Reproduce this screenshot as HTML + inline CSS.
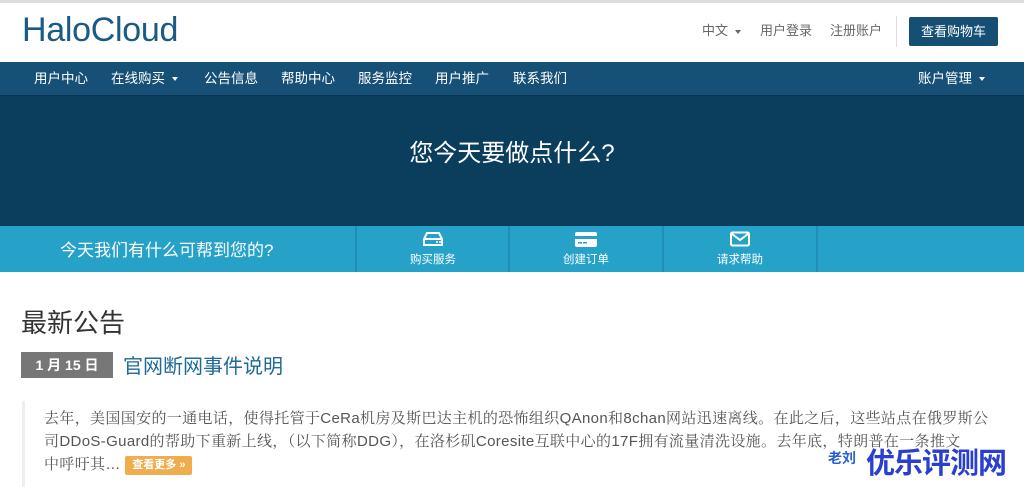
<!DOCTYPE html>
<html><head><meta charset="utf-8"><style>
*{margin:0;padding:0;box-sizing:border-box}
body{width:1024px;height:487px;overflow:hidden;background:#fff;font-family:"Liberation Sans","Noto Sans CJK SC",sans-serif;position:relative}
.abs{position:absolute}
.top{top:0;left:0;width:1024px;height:3px;background:#ddd}
.logo{left:22px;top:11px;font-size:34px;color:#1a5a86;letter-spacing:-0.3px}
.tl{top:20px;font-size:13px;color:#666}
.cart{left:909px;top:17px;width:89px;height:29px;background:#164f74;color:#fff;font-size:13px;text-align:center;line-height:29px;border-radius:2px}
.sep{left:896px;top:16px;width:1px;height:31px;background:#ddd}
.nav{top:62px;left:0;width:1024px;height:33px;background:#175077}
.nav span{position:absolute;top:5px;color:#fff;font-size:13.5px}
.car{display:inline-block;border-left:3.5px solid transparent;border-right:3.5px solid transparent;border-top:4px solid currentColor;vertical-align:middle;margin-left:7px}
.hero{top:95px;left:0;width:1024px;height:131px;background:#0b3d5c;border-top:1px solid #0a3552}
.hero h1{position:absolute;width:100%;top:37px;text-align:center;color:#fff;font-weight:normal;font-size:24px}
.band{top:226px;left:0;width:1024px;height:46px;background:#26a2c9}
.band .q{position:absolute;left:60px;top:10px;color:#fff;font-size:17px}
.band .d{position:absolute;top:0;width:2px;height:46px;background:#1f8fb3}
.band .it{position:absolute;top:5px;width:152px;text-align:center;color:#fff;font-size:11.5px}
.it svg{display:block;margin:0 auto 4px}
.txt{left:44px;top:407px;font-size:15px;line-height:23px;color:#555;white-space:nowrap;letter-spacing:0.35px;font-family:"Liberation Sans","Noto Serif CJK SC",serif}
</style></head><body>
<div class="abs top"></div>
<div class="abs logo">HaloCloud</div>
<div class="abs tl" style="left:702px">中文<span class="car" style="color:#666"></span></div>
<div class="abs tl" style="left:760px">用户登录</div>
<div class="abs tl" style="left:830px">注册账户</div>
<div class="abs sep"></div>
<div class="abs cart">查看购物车</div>
<div class="abs nav">
<span style="left:34px">用户中心</span>
<span style="left:111px">在线购买<i class="car"></i></span>
<span style="left:204px">公告信息</span>
<span style="left:281px">帮助中心</span>
<span style="left:358px">服务监控</span>
<span style="left:435px">用户推广</span>
<span style="left:513px">联系我们</span>
<span style="left:918px">账户管理<i class="car"></i></span>
</div>
<div class="abs hero"><h1>您今天要做点什么?</h1></div>
<div class="abs band">
<div class="q">今天我们有什么可帮到您的?</div>
<div class="d" style="left:355px"></div><div class="d" style="left:508px"></div><div class="d" style="left:662px"></div><div class="d" style="left:816px"></div>
<div class="it" style="left:357px"><svg width="22" height="16" viewBox="0 0 22 16"><path d="M5 2h12l3 6v6H2V8z M2 8h18" fill="none" stroke="#fff" stroke-width="2"/><circle cx="15" cy="11" r="1" fill="#fff"/><circle cx="18" cy="11" r="1" fill="#fff"/></svg>购买服务</div>
<div class="it" style="left:510px"><svg width="22" height="16" viewBox="0 0 22 16"><rect x="0" y="1" width="22" height="15" rx="2" fill="#fff"/><rect x="0" y="5" width="22" height="3" fill="#26a2c9"/><rect x="3" y="11" width="4" height="1.5" fill="#26a2c9"/><rect x="8" y="11" width="4" height="1.5" fill="#26a2c9"/></svg>创建订单</div>
<div class="it" style="left:664px"><svg width="20" height="16" viewBox="0 0 20 16"><rect x="1" y="1.5" width="18" height="13" rx="1.5" fill="none" stroke="#fff" stroke-width="2"/><path d="M2 3l8 6 8-6" fill="none" stroke="#fff" stroke-width="2"/></svg>请求帮助</div>
</div>
<div class="abs" style="left:21px;top:303px;font-size:26px;color:#333">最新公告</div>
<div class="abs" style="left:21px;top:352px;width:92px;height:26px;background:#777;color:#fff;font-weight:bold;font-size:14px;text-align:center;line-height:26px">1 月 15 日</div>
<div class="abs" style="left:123px;top:350px;font-size:20px;color:#1e6a99">官网断网事件说明</div>
<div class="abs" style="left:22px;top:401px;width:3px;height:86px;background:#eee"></div>
<div class="abs txt">去年，美国国安的一通电话，使得托管于CeRa机房及斯巴达主机的恐怖组织QAnon和8chan网站迅速离线。在此之后，这些站点在俄罗斯公<br>司DDoS-Guard的帮助下重新上线，（以下简称DDG），在洛杉矶Coresite互联中心的17F拥有流量清洗设施。去年底，特朗普在一条推文<br>中呼吁其… <span style="display:inline-block;background:#f0ad4e;color:#fff;font-size:11px;font-weight:bold;padding:0 7px;line-height:19px;border-radius:2px;vertical-align:middle;letter-spacing:0;font-family:'Liberation Sans','Noto Sans CJK SC',sans-serif">查看更多 »</span></div>
<div class="abs" style="left:828px;top:448px;font-size:14px;color:#2a5fd0;font-weight:bold">老刘</div>
<div class="abs" style="left:866px;top:440px;font-size:29px;color:#2a3fd0;font-weight:bold;letter-spacing:-1px">优乐评测网</div>
</body></html>
